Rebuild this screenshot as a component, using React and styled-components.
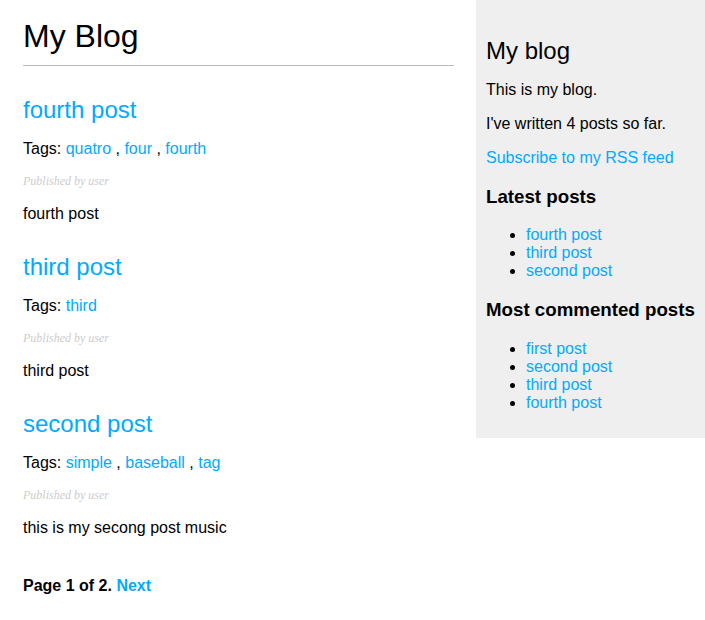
import React from 'react';
import styled, { createGlobalStyle } from 'styled-components';

const posts = [
  { title: 'fourth post', tags: ['quatro', 'four', 'fourth'], body: 'fourth post' },
  { title: 'third post', tags: ['third'], body: 'third post' },
  { title: 'second post', tags: ['simple', 'baseball', 'tag'], body: 'this is my secong post music' },
];

const latest = ['fourth post', 'third post', 'second post'];
const mostCommented = ['first post', 'second post', 'third post', 'fourth post'];

const App = () => {
  const generateTags = tags => (
    tags.map((tag, i) => (
      <React.Fragment key={tag}>
        <Link href="#">{tag}</Link>
        {i < tags.length - 1 && ' , '}
      </React.Fragment>
    ))
  );

  const generatePosts = data => (
    data.map(post => (
      <article key={post.title}>
        <PostTitle><Link href="#">{post.title}</Link></PostTitle>
        <Text>Tags: {generateTags(post.tags)}</Text>
        <PostDate>Published by user</PostDate>
        <Text>{post.body}</Text>
      </article>
    ))
  );

  const generateList = items => (
    <List>
      {items.map(item => (
        <li key={item}><Link href="#">{item}</Link></li>
      ))}
    </List>
  );

  return (
    <>
      <GlobalStyle/>
      <Page>
        <Content>
          <Title>My Blog</Title>
          {generatePosts(posts)}
          <Pagination>
            Page 1 of 2. <Link href="#">Next</Link>
          </Pagination>
        </Content>
        <Sidebar>
          <SidebarTitle>My blog</SidebarTitle>
          <Text>This is my blog.</Text>
          <Text>I've written 4 posts so far.</Text>
          <Text><Link href="#">Subscribe to my RSS feed</Link></Text>
          <SectionTitle>Latest posts</SectionTitle>
          {generateList(latest)}
          <SectionTitle>Most commented posts</SectionTitle>
          {generateList(mostCommented)}
        </Sidebar>
      </Page>
    </>
  );
};

const GlobalStyle = createGlobalStyle`
  body {
    margin: 0;
    padding: 0;
    font-family: "Liberation Sans", Arial, Helvetica, sans-serif;
    color: #000;
    background: #fff;
  }
`;

const Page = styled.div`
  display: flex;
  justify-content: space-between;
  align-items: flex-start;
  width: 705px;
`;

const Content = styled.main`
  width: 431px;
  margin-left: 23px;
`;

const Link = styled.a`
  color: #00abff;
  text-decoration: none;
`;

const Title = styled.h1`
  font-size: 32px;
  font-weight: normal;
  margin: 18px 0 0;
  padding: 0 0 10px;
  border-bottom: 1px solid #bbb;
`;

const PostTitle = styled.h2`
  font-size: 24px;
  font-weight: normal;
  margin: 30px 0 0;
`;

const Text = styled.p`
  font-size: 16px;
  margin: 16px 0;
`;

const PostDate = styled.p`
  color: #ccc;
  font-family: "Liberation Serif", Georgia, serif;
  font-size: 12px;
  font-style: italic;
  margin: 16px 0;
`;

const Pagination = styled.div`
  margin: 40px 0;
  font-weight: bold;
`;

const Sidebar = styled.aside`
  width: 209px;
  padding: 10px;
  background: #efefef;
`;

const SidebarTitle = styled.h2`
  font-size: 24px;
  font-weight: normal;
  margin: 27px 0 0;
`;

const SectionTitle = styled.h3`
  font-size: 18.72px;
  font-weight: bold;
  margin: 18.72px 0;
`;

const List = styled.ul`
  margin: 16px 0;
  padding-left: 40px;
`;

export default App;
